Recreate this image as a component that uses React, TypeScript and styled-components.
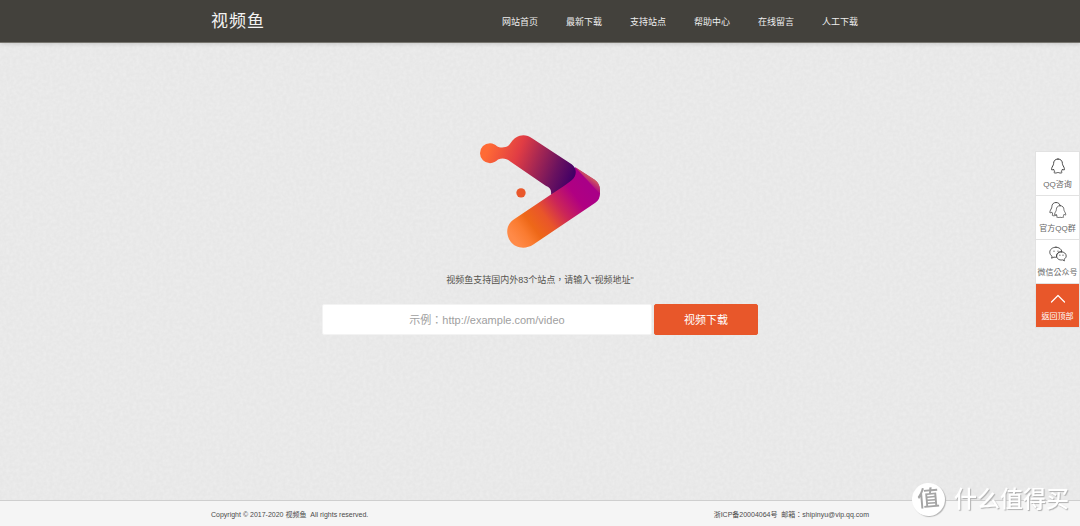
import React from 'react';
import styled, { createGlobalStyle, css } from 'styled-components';

const GlobalStyle = createGlobalStyle`
  *, *::before, *::after { box-sizing: border-box; }
  body {
    margin: 0;
    background: #e7e7e7;
    color: #55534e;
    font-family: "Liberation Sans", "Noto Sans CJK TC", sans-serif;
    font-size: 9px;
  }
  a { color: inherit; text-decoration: none; }
`;

const Page = styled.div`
  position: relative;
  isolation: isolate;
  min-height: 100vh;
  display: flex;
  flex-direction: column;
`;

const Texture = styled.svg`
  position: absolute;
  inset: 0;
  width: 100%;
  height: 100%;
  z-index: -1;
`;

const Container = styled.div`
  width: 100%;
  max-width: 658px;
  margin: 0 auto;
  display: flex;
  align-items: center;
  justify-content: space-between;
`;

const Header = styled.header`
  background: #43413c;
  border-bottom: 1px solid #77756f;
  box-shadow: 0 1px 4px rgba(0, 0, 0, 0.14);
  padding: 9px 0 8px;
`;

const Brand = styled.a`
  color: #f3f3f3;
  font-size: 17px;
  line-height: 25px;
  letter-spacing: 1px;
`;

const Nav = styled.nav`
  display: flex;
  gap: 28px;
  padding-right: 11px;
`;

const NavLink = styled.a`
  color: #eeeeee;
  line-height: 24px;
  white-space: nowrap;
`;

const Main = styled.main`
  flex: 1;
  display: flex;
  flex-direction: column;
  align-items: center;
  padding: 92px 16px 40px;
`;

const Logo = styled.svg`
  display: block;
  width: 120px;
  height: 113px;
`;

const Tagline = styled.p`
  margin: 24px 0 16px;
  line-height: 16px;
`;

const SearchForm = styled.form`
  width: 100%;
  max-width: 436px;
  display: flex;
  gap: 2px;
`;

const control = css`
  height: 31px;
  border: 1px solid #f3f3f3;
  border-radius: 2px;
  font-family: inherit;
  font-size: 11px;
  text-align: center;
`;

const UrlInput = styled.input`
  ${control}
  flex: 1;
  min-width: 0;
  padding: 0 8px;
  background: #ffffff;
  color: #555555;
  &::placeholder { color: #a0a0a0; opacity: 1; }
`;

const SubmitButton = styled.button`
  ${control}
  width: 104px;
  padding: 0 0 2px;
  border-color: #e8572a;
  background: #e8572a;
  color: #ffffff;
  cursor: pointer;
`;

const Footer = styled.footer`
  background: #f5f5f5;
  border-top: 1px solid #cfcfcf;
  padding: 9px 0 6px;
  color: #4a4a4a;
  font-size: 7px;
  line-height: 10px;
  white-space: pre;
`;

const SideBar = styled.aside`
  position: fixed;
  right: 0;
  top: 151px;
  width: 45px;
  display: flex;
  flex-direction: column;
  border: 1px solid #e2e2e2;
  background: #e2e2e2;
  gap: 1px;
`;

const SideItem = styled.a<{ $active?: boolean }>`
  height: 43px;
  display: flex;
  flex-direction: column;
  align-items: center;
  gap: 5px;
  padding-top: 6px;
  background: ${(p) => (p.$active ? '#e8572a' : '#ffffff')};
  color: ${(p) => (p.$active ? '#ffffff' : '#666666')};
  font-size: 8px;
  line-height: 12px;
  white-space: nowrap;
  svg {
    width: 18px;
    height: 16px;
    fill: none;
    stroke: ${(p) => (p.$active ? '#ffffff' : '#444444')};
    stroke-linecap: round;
    stroke-linejoin: round;
  }
`;

const Watermark = styled.div`
  position: fixed;
  right: 11px;
  bottom: 10px;
  display: flex;
  align-items: center;
  gap: 9px;
  color: #ffffff;
  font-size: 23px;
  font-weight: 500;
  line-height: 33px;
  text-shadow: 1px 1px 1px #b0b0b0;
  pointer-events: none;
`;

const Seal = styled.span`
  width: 33px;
  height: 33px;
  border-radius: 50%;
  background: #ffffff;
  box-shadow: 1px 1px 1px #b4b4b4;
  color: #a4a4a4;
  font-size: 22px;
  line-height: 31px;
  text-align: center;
  text-shadow: none;
  transform: rotate(-5deg);
`;

const navItems = ['网站首页', '最新下载', '支持站点', '帮助中心', '在线留言', '人工下载'];

const PENGUIN =
  'M9 1 C5.8 1 4.6 3.2 4.6 5.6 C4.6 7.2 3 8.6 2.6 10.6 C2.3 12.2 3 12.8 4.4 11 C4.7 12 5.2 12.7 5.7 13.2 C4.4 14.2 5 15 6.4 15 C7.8 15 8.2 14.5 9 14.5 C9.8 14.5 10.2 15 11.6 15 C13 15 13.6 14.2 12.3 13.2 C12.8 12.7 13.3 12 13.6 11 C15 12.8 15.7 12.2 15.4 10.6 C15 8.6 13.4 7.2 13.4 5.6 C13.4 3.2 12.2 1 9 1 Z';

const sideItems = [
  { label: 'QQ咨询', icon: <path d={PENGUIN} /> },
  {
    label: '官方QQ群',
    icon: (
      <g strokeWidth="0.9">
        <path d={PENGUIN} transform="translate(-1.5 -0.5) scale(0.95)" />
        <path d={PENGUIN} fill="#ffffff" transform="translate(3.4 2.8) scale(0.86)" />
      </g>
    ),
  },
  {
    label: '微信公众号',
    icon: (
      <g strokeWidth="0.9">
        <path d="M7 1.2 C3.4 1.2 0.8 3.4 0.8 6.2 C0.8 7.9 1.7 9.3 3.1 10.3 L2.6 12.2 L5 11.1 C5.8 11.3 6.8 11.4 7.6 11.2 C7 7.8 9.3 5.6 12.9 5.6 C12.4 3 10 1.2 7 1.2 Z" />
        <path d="M12.4 5.8 C9.6 5.8 7.6 7.7 7.6 10 C7.6 12.5 10 14.5 13.6 13.9 L15.4 14.9 L15.1 13.3 C16.4 12.4 17.2 11.3 17.2 10 C17.2 7.7 15.2 5.8 12.4 5.8 Z" />
        <path d="M5 5 v0.2 M9 5 v0.2 M10.9 9 v0.2 M14 9 v0.2" strokeWidth="1.1" />
      </g>
    ),
  },
  { label: '返回顶部', icon: <path d="M2.5 12 L9 5.5 L15.5 12" strokeWidth="1.2" />, active: true },
];

const FishLogo = () => (
  <Logo viewBox="30 30 360 338" role="img" aria-label="视频鱼">
    <defs>
      <linearGradient id="upper" gradientUnits="userSpaceOnUse" x1="50" y1="80" x2="300" y2="175">
        <stop offset="0" stopColor="#ff6a35" />
        <stop offset="0.34" stopColor="#e03c44" />
        <stop offset="0.55" stopColor="#a92852" />
        <stop offset="0.8" stopColor="#6a125f" />
        <stop offset="1" stopColor="#430066" />
      </linearGradient>
      <linearGradient id="lower" gradientUnits="userSpaceOnUse" x1="135" y1="345" x2="350" y2="185">
        <stop offset="0" stopColor="#ff8a48" />
        <stop offset="0.14" stopColor="#fa7b30" />
        <stop offset="0.25" stopColor="#ee6818" />
        <stop offset="0.43" stopColor="#e9552a" />
        <stop offset="0.62" stopColor="#cc2657" />
        <stop offset="0.84" stopColor="#b00082" />
        <stop offset="1" stopColor="#aa0087" />
      </linearGradient>
      <linearGradient id="fold" gradientUnits="userSpaceOnUse" x1="347" y1="182" x2="368" y2="154">
        <stop offset="0" stopColor="#c8406a" stopOpacity="0" />
        <stop offset="1" stopColor="#d87552" />
      </linearGradient>
    </defs>
    <path
      fill="url(#lower)"
      d="M316 126 L374 164 Q390 176 390 194 V206 Q390 223 376 233 L190 358 C166 374 136 369 121 348 C106 326 109 299 130 284 L243 208 L290 160 Z"
    />
    <path
      fill="url(#fold)"
      d="M316 126 L374 164 Q390 176 390 194 V206 Z"
    />
    <path
      fill="url(#upper)"
      d="M60 54 C70 54 75 58 81 63 C88 68 106 68 115 62 C122 55 125 46 138 37 C154 27 172 29 186 39 L305 117 C322 129 321 153 305 165 Q300 170 243 208 C245 193 239 187 226 181 L122 110 C111 101 99 97 84 103 C77 109 71 114 60 114 A30 30 0 0 1 60 54 Z"
    />
    <circle cx="153" cy="203" r="14" fill="#e9572b" />
  </Logo>
);

export default function App() {
  return (
    <>
      <GlobalStyle />
      <Page>
        <Texture aria-hidden="true">
          <filter id="paper" x="0" y="0" width="100%" height="100%">
            <feTurbulence type="fractalNoise" baseFrequency="0.3" numOctaves="2" seed="4" stitchTiles="stitch" />
            <feColorMatrix values="0 0 0 0 1  0 0 0 0 1  0 0 0 0 1  0.4 0 0 0 -0.12" />
          </filter>
          <rect width="100%" height="100%" filter="url(#paper)" />
        </Texture>
        <Header>
          <Container>
            <Brand href="#">视频鱼</Brand>
            <Nav>
              {navItems.map((item) => (
                <NavLink href="#" key={item}>{item}</NavLink>
              ))}
            </Nav>
          </Container>
        </Header>
        <Main>
          <FishLogo />
          <Tagline>视频鱼支持国内外83个站点，请输入"视频地址"</Tagline>
          <SearchForm onSubmit={(e) => e.preventDefault()}>
            <UrlInput type="text" aria-label="视频地址" placeholder="示例：http://example.com/video" />
            <SubmitButton type="submit">视频下载</SubmitButton>
          </SearchForm>
        </Main>
        <Footer>
          <Container>
            <span>{'Copyright © 2017-2020 视频鱼  All rights reserved.'}</span>
            <span>{'浙ICP备20004064号  邮箱：shipinyu@vip.qq.com'}</span>
          </Container>
        </Footer>
        <SideBar>
          {sideItems.map(({ label, icon, active }) => (
            <SideItem href="#" key={label} $active={active}>
              <svg viewBox="0 0 18 16" aria-hidden="true">{icon}</svg>
              {label}
            </SideItem>
          ))}
        </SideBar>
        <Watermark>
          <Seal>值</Seal>
          <span>什么值得买</span>
        </Watermark>
      </Page>
    </>
  );
}
